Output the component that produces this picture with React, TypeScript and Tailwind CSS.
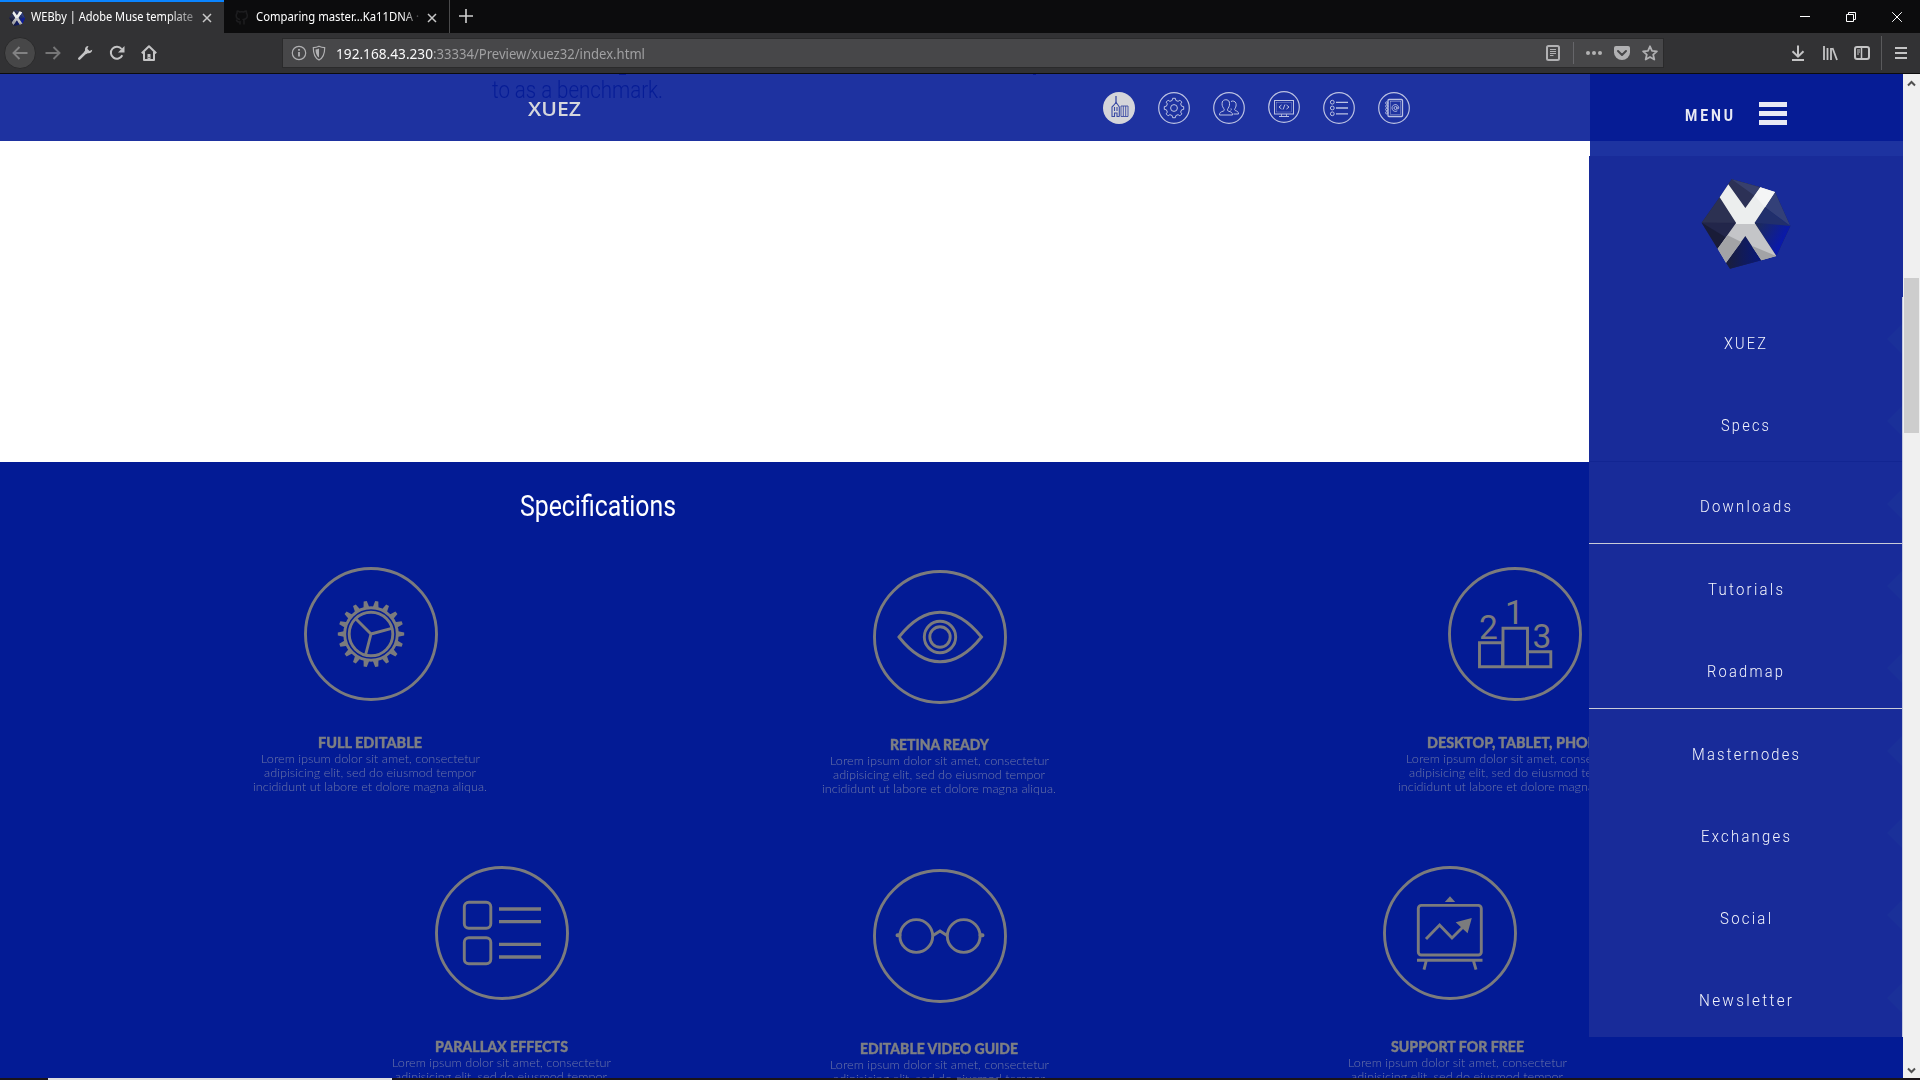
import React, { useLayoutEffect, useRef } from "react";

/** One line of text squeezed or stretched to a given width. */
function Fit({ w, ls = 0, className = "", children }: { w: number; ls?: number; className?: string; children: React.ReactNode }) {
  const ref = useRef<HTMLSpanElement>(null);
  useLayoutEffect(() => {
    const el = ref.current;
    if (!el) return;
    el.style.transform = "none";
    const natural = el.getBoundingClientRect().width - ls;
    el.style.transform = `scaleX(${w / natural})`;
  }, [w, ls]);
  return (
    <span className={`block shrink-0 ${className}`} style={{ width: w }}>
      <span ref={ref} className="inline-block origin-left whitespace-nowrap">
        {children}
      </span>
    </span>
  );
}

function Svg({ size = 16, className = "", children }: { size?: number; className?: string; children: React.ReactNode }) {
  return (
    <svg width={size} height={size} viewBox={`0 0 ${size} ${size}`} fill="none" stroke="currentColor" className={`shrink-0 ${className}`}>
      {children}
    </svg>
  );
}

const Close = ({ className = "" }: { className?: string }) => (
  <Svg size={10} className={className}>
    <path d="M1 1l8 8M9 1l-8 8" strokeWidth="1.5" />
  </Svg>
);

const hexagon = "455,148 541,172 585,186 631,288 589,378 544,391 450,416 413,356 365,278 419,202";

function XLogo({ size }: { size: number }) {
  return (
    <svg width={size} height={size} viewBox="363 147 270 270" className="shrink-0">
      <defs>
        <linearGradient id="right" x1="0" y1="0" x2="1" y2="1">
          <stop offset="0.3" stopColor="#1c2a5c" />
          <stop offset="1" stopColor="#0010d0" />
        </linearGradient>
        <linearGradient id="bottom" x1="0" y1="0" x2="1" y2="0">
          <stop offset="0" stopColor="#1a1e3a" />
          <stop offset="1" stopColor="#07177a" />
        </linearGradient>
      </defs>
      <polygon points={hexagon} fill="#20264a" />
      <polygon points="455,148 541,172 496,234 445,163" fill="#2c3156" />
      <polygon points="455,148 541,172 524,197" fill="#38406c" />
      <polygon points="419,202 468,278 365,278" fill="#2c3152" />
      <polygon points="365,278 468,280 437,322" fill="#22264a" />
      <polygon points="365,278 437,322 413,356" fill="#191c38" />
      <polygon points="585,186 631,288 589,378 524,278" fill="url(#right)" />
      <polygon points="585,186 631,288 555,232" fill="#334078" />
      <polygon points="555,232 631,288 524,278" fill="#212f6c" />
      <polygon points="496,318 544,391 450,416 438,398" fill="url(#bottom)" />
      <polygon points="445,163 496,234 541,172 585,186 524,278 526,284 466,284 468,278 419,202" fill="#eceeee" />
      <polygon points="541,172 585,186 555,232 524,197" fill="#f4f5f6" />
      <polygon points="466,282 526,282 589,378 544,391 496,318 438,398 413,356" fill="#c4c5c8" />
      <polygon points="443,316 484,336 438,398 413,356" fill="#a2a3a6" />
      <polygon points="515,347 589,378 544,391" fill="#a2a3a6" />
    </svg>
  );
}

function TabBar() {
  return (
    <div className="flex h-[33px] shrink-0 bg-[#0c0c0d] text-[12px] leading-[16px] text-[#f9f9fa]">
      <div className="flex h-full w-[224px] items-center border-t-2 border-[#0a84ff] bg-[#323234] pl-[9px] text-[#c8c8c8]">
        <XLogo size={16} />
        <Fit w={162} className="-mt-[2px] ml-[6px] text-white [mask-image:linear-gradient(to_right,black_84%,#0006)]">WEBby | Adobe Muse template</Fit>
        <Close className="ml-[9px]" />
      </div>
      <div className="flex h-full w-[226px] items-center border-r border-[#4a4a4b] pl-[10px] pt-[2px] text-[#c8c8c8]">
        <Svg className="text-[#1d1d1f]">
          <path d="M6 14.5v-2.500c-3 .5-3-1.500-4-2M10 14.500v-3c0-1 0-1.500-.5-2 2.500-.3 3.800-1.500 3.800-4 0-1-.3-1.800-.9-2.500.2-.7.1-1.400-.2-2-1 0-1.800.5-2.500 1a8 8 0 0 0-4 0C5 1.500 4 1 3.300 1c-.3.600-.4 1.300-.2 2-.6.700-.9 1.500-.9 2.500 0 2.500 1.300 3.700 3.800 4" strokeWidth="1.600" />
        </Svg>
        <Fit w={163} className="-mt-[2px] ml-[6px] text-white [mask-image:linear-gradient(to_right,black_90%,#0003)]">Comparing master...Ka11DNA ·</Fit>
        <Close className="ml-[8px]" />
      </div>
      <Svg size={14} className="ml-[9px] mt-[9px] text-[#d0d0d0]">
        <path d="M7 0v14M0 7h14" strokeWidth="1.600" />
      </Svg>
      <div className="ml-auto flex gap-[36px] pr-[18px] pt-[12px] text-white">
        <Svg size={10}>
          <path d="M0 4.500h10" />
        </Svg>
        <Svg size={10}>
          <path d="M.5 2.500h7v7h-7zM2.500 2.500v-2h7v7h-2" />
        </Svg>
        <Svg size={10}>
          <path d="M.2.200l9.600 9.600M9.800.200L.2 9.800" />
        </Svg>
      </div>
    </div>
  );
}

function Toolbar() {
  return (
    <div className="flex h-[41px] shrink-0 items-center border-b border-[#0c0c0d] bg-[#323234] pl-[4px] text-[#c4c4c5]">
      <div className="flex size-[32px] items-center justify-center rounded-full border border-[#2a2a2b] bg-[#474748] text-[#828283]">
        <Svg>
          <path d="M15.500 8H1.500M7.500 2L1.500 8l6 6" strokeWidth="1.900" />
        </Svg>
      </div>
      <Svg className="ml-[9px] text-[#767677]">
        <path d="M.5 8h14M8.500 2l6 6-6 6" strokeWidth="1.900" />
      </Svg>
      <Svg className="ml-[16px]">
        <path d="M2.300 13.700L9 7" strokeWidth="2.600" strokeLinecap="round" />
        <path d="M11.500 1C9 1 7.500 3 8 5.500l-1 2L8.700 9.200l2-1c2.500.5 4.500-1 4.500-3.500L12.500 6 10.300 3.800z" fill="currentColor" stroke="none" />
      </Svg>
      <Svg className="ml-[16px]">
        <path d="M13.300 10.300A6 6 0 1 1 12.600 4" strokeWidth="2" />
        <path d="M15.500 1v6.500H9z" fill="currentColor" stroke="none" />
      </Svg>
      <Svg className="ml-[16px]">
        <path d="M.8 8.300L8 1.200l7.200 7.100M3 7v8h10V7" strokeWidth="2" strokeLinejoin="round" />
        <path d="M6.500 9h3v6h-3z" fill="currentColor" stroke="none" />
        <path d="M8 12v1" stroke="#323234" />
      </Svg>
      <div className="ml-[125px] flex h-[30px] w-[1382px] shrink-0 items-center border border-[#2a2a2b] bg-[#474749] pl-[8px] text-[#b1b1b3]">
        <Svg>
          <circle cx="8" cy="8" r="6.700" strokeWidth="1.200" />
          <path d="M8 7v4.500M8 4v1.700" strokeWidth="1.800" />
        </Svg>
        <Svg className="ml-[4px]">
          <path d="M8 1.200c2 1 3.800 1.400 5.700 1.500C13.700 9 12 13 8 15 4 13 2.300 9 2.300 2.700 4.200 2.600 6 2.200 8 1.200z" strokeWidth="1.200" />
          <path d="M8 3.500v9C5.600 11 4.600 8.300 4.500 4.500 5.800 4.400 6.900 4.100 8 3.500z" fill="currentColor" stroke="none" />
        </Svg>
        <div className="ml-[9px] flex pt-[1px] text-[14px] leading-[18px] text-[#a0a0a2]">
          <Fit w={97} className="text-[#f9f9fa]">192.168.43.230</Fit>
          <Fit w={212}>:33334/Preview/xuez32/index.html</Fit>
        </div>
        <Svg className="ml-auto">
          <rect x="2" y="1" width="12" height="14" rx="1.500" strokeWidth="2" />
          <path d="M5 4.500h6M5 6.500h6M5 8.500h6M5 10.500h3.500" />
        </Svg>
        <div className="ml-[12px] h-[22px] w-px bg-[#66666a]" />
        <Svg className="ml-[12px]">
          <g fill="currentColor" stroke="none">
            <circle cx="2" cy="8" r="2" />
            <circle cx="8" cy="8" r="2" />
            <circle cx="14" cy="8" r="2" />
          </g>
        </Svg>
        <Svg className="ml-[12px]">
          <path d="M2 1h12a2 2 0 0 1 2 2v4.500a8 7.500 0 0 1-16 0V3a2 2 0 0 1 2-2z" fill="currentColor" stroke="none" />
          <path d="M4 6l4 4 4-4" stroke="#474749" strokeWidth="2" strokeLinecap="round" strokeLinejoin="round" />
        </Svg>
        <Svg className="ml-[12px] mr-[5px]">
          <path d="M8 1.300l2 4.500 4.900.5-3.700 3.300 1.100 4.900L8 12l-4.300 2.500 1.100-4.900L1.100 6.300 6 5.800z" strokeWidth="1.800" strokeLinejoin="round" />
        </Svg>
      </div>
      <Svg className="ml-[126px]">
        <path d="M8 .5v11M2.500 6.300L8 11.700l5.500-5.400M2 15h12" strokeWidth="2" />
      </Svg>
      <Svg className="ml-[16px]">
        <path d="M2 1v14M5.500 3v12M9 3v12M10.500 3l4.500 12" strokeWidth="1.800" />
      </Svg>
      <Svg className="ml-[16px]">
        <rect x="1" y="2" width="14" height="12" rx="2" strokeWidth="2" />
        <path d="M7.500 2v12" strokeWidth="1.500" />
        <path d="M3 5h3M3 7h3M3 9h2" />
      </Svg>
      <div className="ml-[11px] h-[34px] w-px bg-[#5a5a5c]" />
      <Svg className="ml-[11px]">
        <path d="M2 3h12M2 8h12M2 13h12" strokeWidth="2" />
      </Svg>
    </div>
  );
}

function gearPath(c: number, teeth: number, rIn: number, rOut: number) {
  const step = (Math.PI * 2) / teeth;
  const pts: string[] = [];
  for (let i = 0; i < teeth; i++) {
    const a = i * step - Math.PI / 2;
    [[-0.3, rIn], [-0.18, rOut], [0.18, rOut], [0.3, rIn]].forEach(([f, r]) => {
      pts.push(`${(c + r * Math.cos(a + f * step)).toFixed(2)} ${(c + r * Math.sin(a + f * step)).toFixed(2)}`);
    });
  }
  return `M${pts.join("L")}Z`;
}

const navIcons = [
  <>
    <circle cx="16" cy="16" r="16" fill="#d4d5da" stroke="none" />
    <g stroke="#3a4aa4" strokeWidth="1.100">
      <path d="M13 4v7" strokeWidth="1.300" />
      <path d="M9 24.500V15l2-2 2-2.500 2 2.500 1.300 2v9.500M8.500 24.500h3V21h2.500v3.500h2.500M11.500 15v4M14 15v4" />
      <path d="M18 24.500V14h7v10.500zM20.300 14v10M22.700 14v10" strokeWidth=".9" />
    </g>
  </>,
  <>
    <path d={gearPath(16, 8, 7.8, 9.8)} />
    <circle cx="16" cy="16" r="3.400" />
  </>,
  <>
    <path d="M6.500 23c0-2.500 1-3 4-4 1-.4 1-1.500.2-2.500C9 14 8.800 12.500 9.300 10c.8-3 6.300-3 7 0 .5 2.500.3 4-1.300 6.500-.8 1-.8 2.100.2 2.500 3 1 4.300 1.500 4.300 4z" />
    <path d="M18 9.500c1.500-1 4.500-.5 5 2 .3 2 .1 3-1 5-.6 1-.5 1.500.3 2 2 .7 3.200 1.200 3.200 3.500h-5M18 16.500c.5 1 .3 1.500-.3 2" />
  </>,
  <>
    <rect x="6.500" y="9.500" width="19" height="13.500" />
    <rect x="8.500" y="11.500" width="15" height="9.500" strokeWidth=".3" />
    <path d="M13.500 14l-2.500 2 2.500 2M18.500 14l2.500 2-2.500 2M17 13.500l-2 5M11 25.500h10" />
    <path d="M13.500 23v2M18.500 23v2" strokeWidth=".8" />
  </>,
  <>
    <circle cx="9.300" cy="10.200" r="1.900" />
    <circle cx="9.300" cy="16" r="1.900" />
    <circle cx="9.300" cy="21.800" r="1.900" />
    <path d="M13 10.300h12M13 16h12M13 21.800h12" strokeWidth="1.300" />
  </>,
  <>
    <rect x="10" y="7.500" width="14.500" height="17" rx="1" strokeWidth="1.300" />
    <rect x="12.300" y="9.500" width="10.500" height="13" strokeWidth=".4" />
    <circle cx="17.500" cy="16" r="1.500" strokeWidth=".9" />
    <path d="M19 14.500v2c.3 1 1.800.5 1.800-.5a3.400 3.400 0 1 0-1.500 2.800" strokeWidth=".9" />
    {[11, 14.200, 17.500, 20.800].map((y) => (
      <circle key={y} cx="8.800" cy={y} r="1.200" strokeWidth=".9" />
    ))}
  </>,
];

function SiteNav() {
  return (
    <header className="relative flex h-[67px] items-start overflow-hidden bg-[#1e32a0]">
      <div className="absolute left-[492px] top-0 font-[Roboto] text-[24px] font-light text-[#061c96]">
        <Fit w={171} className="leading-[32px]">to as a benchmark.</Fit>
      </div>
      <div className="absolute left-[619px] top-0 h-px w-[7px] bg-[#061c96]" />
      <div className="absolute left-[1033px] top-0 h-px w-[3px] bg-[#061c96]" />
      <Fit w={53} className="relative ml-[528px] mt-[21px] font-['Open_Sans'] text-[20px] font-semibold leading-[28px] text-[#d6d7dc]">XUEZ</Fit>
      <nav className="ml-[522px] mt-[18px] flex gap-[23px] text-[#bcc2e2]">
        {navIcons.map((icon, i) => (
          <Svg key={i} size={32} className={i === 3 ? "-mt-px" : ""}>
            {i > 0 && <circle cx="16" cy="16" r="15.300" strokeWidth="1.200" />}
            {icon}
          </Svg>
        ))}
      </nav>
    </header>
  );
}

const featureIcons = {
  gear: (
    <>
      {Array.from({ length: 18 }, (_, i) => (
        <path key={i} d="M64 41L65.400 33.800h3.200L70 41z" fill="currentColor" stroke="none" transform={`rotate(${i * 20 + 10} 67 67)`} />
      ))}
      <circle cx="67" cy="67" r="26.300" />
      <circle cx="67" cy="67" r="21.800" />
      <path d="M67 67L52 52M67 67l20.700-5.700M67 67l-5.300 20.500" />
    </>
  ),
  eye: (
    <>
      <path d="M26 67C52 34 82 34 108.500 67C82 100 52 100 26 67z" />
      <circle cx="67" cy="67" r="15.700" />
      <circle cx="67" cy="67" r="10.200" />
    </>
  ),
  podium: (
    <>
      <path d="M31.500 75.700h23V99.800h-23zM55 61.300h24.500V99.800H55zM79.500 84.700h23.300V99.800H79.500z" />
      <g fill="currentColor" stroke="none" fontFamily="Roboto" fontSize="33.500" textAnchor="middle">
        <text x="40.500" y="72">2</text>
        <text x="66.500" y="57">1</text>
        <text x="93.800" y="81">3</text>
      </g>
    </>
  ),
  list: (
    <>
      <rect x="29.300" y="36.300" width="26.500" height="26" rx="4.500" />
      <rect x="29.300" y="71.700" width="26.500" height="26" rx="4.500" />
      <path d="M64 43h42M64 55.700h42M64 78.300h42M64 91h42" strokeWidth="3.300" />
    </>
  ),
  glasses: (
    <>
      <circle cx="43.300" cy="67" r="16.400" />
      <circle cx="90.700" cy="67" r="16.400" />
      <path d="M60 66.500L67 62l7 4.500" />
      <path d="M24.500 66.300h2M107.500 66.300h2" strokeWidth="4" strokeLinecap="round" />
    </>
  ),
  chart: (
    <>
      <path d="M67 30.300l5.200 5.700H61.800z" fill="currentColor" stroke="none" />
      <rect x="35.300" y="39.400" width="63" height="49.600" rx="3" />
      <path d="M43 73l13.600-14L69 72l12-12M34 94.300h65.500M43.200 95l-2.200 8.700M90.500 95l2.500 8.700" />
      <path d="M88.800 52l-4.200 15.300-11.900-11z" fill="currentColor" stroke="none" />
    </>
  ),
};

type FeatureProps = { icon: keyof typeof featureIcons; title: string; w: number; className: string; iconClass?: string; textClass?: string };

function Feature({ icon, title, w, className, iconClass = "", textClass = "mt-[33px]" }: FeatureProps) {
  return (
    <article className={`flex w-[234px] shrink-0 flex-col items-center text-[#7e7f83] ${className}`}>
      <Svg size={134} className={`text-[#7b7b7d] ${iconClass}`}>
        <circle cx="67" cy="67" r="65.500" strokeWidth="2.900" />
        <g strokeWidth="2.900">{featureIcons[icon]}</g>
      </Svg>
      <Fit w={w} className={`font-[Lato] text-[15.500px] font-black leading-[17px] [-webkit-text-stroke:0.4px_currentColor] ${textClass}`}>{title}</Fit>
      <div className="mt-px flex flex-col items-center font-[Lato] text-[12.500px] font-light leading-[14px] text-[#6d76a8]">
        <Fit w={219}>Lorem ipsum dolor sit amet, consectetur</Fit>
        <Fit w={212}>adipisicing elit, sed do eiusmod tempor</Fit>
        <Fit w={234}>incididunt ut labore et dolore magna aliqua.</Fit>
      </div>
    </article>
  );
}

const menuItems: [string, number, string][] = [
  ["XUEZ", 42, "pt-[11px]"],
  ["Specs", 48, "pt-[13px] border-b border-[#122592]"],
  ["Downloads", 91, "pt-[10px] border-b border-[#c9cbd8]"],
  ["Tutorials", 75, "pt-[10px]"],
  ["Roadmap", 76, "pt-[10px] border-b border-[#c9cbd8]"],
  ["Masternodes", 107, "pt-[11px]"],
  ["Exchanges", 89, "pt-[9px]"],
  ["Social", 51, "pt-[10px]"],
  ["Newsletter", 93, "pt-[10px]"],
];

function SideMenu() {
  return (
    <aside className="relative -ml-px flex w-[314px] shrink-0 flex-col">
      <div className="ml-px flex h-[67px] bg-[#061c95] text-[#e8e9f4]">
        <Fit w={48} ls={3.5} className="ml-[95px] mt-[31px] font-[Roboto] text-[17px] font-bold leading-[21px] tracking-[3.5px]">MENU</Fit>
        <div className="ml-[26px] mt-[28px] flex w-[28px] flex-col gap-[4px]">
          <i className="h-[5px] bg-current" />
          <i className="h-[5px] bg-current" />
          <i className="h-[5px] bg-current" />
        </div>
      </div>
      <div className="ml-px h-[15px] bg-[#1d33a0]" />
      <div className="flex h-[141px] justify-center bg-[#182b99] pr-px pt-[23px]">
        <XLogo size={90} />
      </div>
      <ul className="flex h-[740px] flex-col border-r border-[#c3c7e0] bg-[#182b99] font-[Roboto] text-[16.500px] text-[#f4f5fc]">
        {menuItems.map(([label, w, cls]) => (
          <li key={label} className={`relative flex h-[82.330px] shrink-0 items-center justify-center pr-px last:h-auto last:flex-1 ${cls}`}>
            <Fit w={w} ls={2.5} className="font-light leading-[20px] tracking-[2.5px]">{label}</Fit>
            <svg width="15" height="30" className="absolute right-0 top-[27px]">
              <path d="M15 0v30L0 15z" fill="#1a3099" />
            </svg>
          </li>
        ))}
      </ul>
    </aside>
  );
}

function ScrollBar() {
  return (
    <div className="flex w-[17px] shrink-0 flex-col items-center bg-[#f0f0f0] text-[#505050]">
      <Svg size={9} className="mt-[5px]">
        <path d="M1 6.500l3.500-3.500L8 6.500" strokeWidth="2" />
      </Svg>
      <div className="mt-[190px] h-[155px] w-[15px] bg-[#cdcdcd]" />
      <Svg size={9} className="mb-[3px] mt-auto">
        <path d="M1 2.500l3.500 3.500L8 2.500" strokeWidth="2" />
      </Svg>
    </div>
  );
}

export default function App() {
  return (
    <div className="flex h-[1080px] w-[1920px] flex-col overflow-hidden bg-black font-['Noto_Sans',sans-serif]">
      <TabBar />
      <Toolbar />
      <div className="flex h-[1004px] shrink-0 overflow-hidden bg-[#031b95]">
        <main className="w-[1590px] shrink-0 overflow-hidden">
          <SiteNav />
          <div className="h-[321px] bg-white" />
          <section className="pt-[24px]">
            <h2 className="ml-[520px] font-[Roboto] text-[30px] leading-[40px] text-white">
              <Fit w={156}>Specifications</Fit>
            </h2>
            <div className="mt-[41px] flex h-[299px] w-[1800px] items-start">
              <Feature icon="gear" title="FULL EDITABLE" w={104} className="ml-[253px]" iconClass="ml-px" />
              <Feature icon="eye" title="RETINA READY" w={99} className="ml-[335px] mt-[3px]" iconClass="ml-[2px]" textClass="mt-[32px]" />
              <Feature icon="podium" title="DESKTOP, TABLET, PHONES" w={188} className="ml-[342px]" iconClass="-ml-px" textClass="mt-[33px] ml-[11px]" />
            </div>
            <div className="flex w-[1800px] items-start">
              <Feature icon="list" title="PARALLAX EFFECTS" w={133} className="ml-[384px]" iconClass="ml-px" textClass="mt-[38px] ml-px" />
              <Feature icon="glasses" title="EDITABLE VIDEO GUIDE" w={158} className="ml-[204px] mt-[3px]" iconClass="ml-[2px]" textClass="mt-[37px]" />
              <Feature icon="chart" title="SUPPORT FOR FREE" w={133} className="ml-[284px]" iconClass="-ml-[14px]" textClass="mt-[38px]" />
            </div>
          </section>
        </main>
        <SideMenu />
        <ScrollBar />
      </div>
      <div className="flex h-[2px] shrink-0 bg-[#1a1418]">
        <div className="ml-[48px] w-[344px] bg-[#dedee0]" />
        <div className="ml-[565px] w-[41px] bg-[#4c4a50]" />
      </div>
    </div>
  );
}
